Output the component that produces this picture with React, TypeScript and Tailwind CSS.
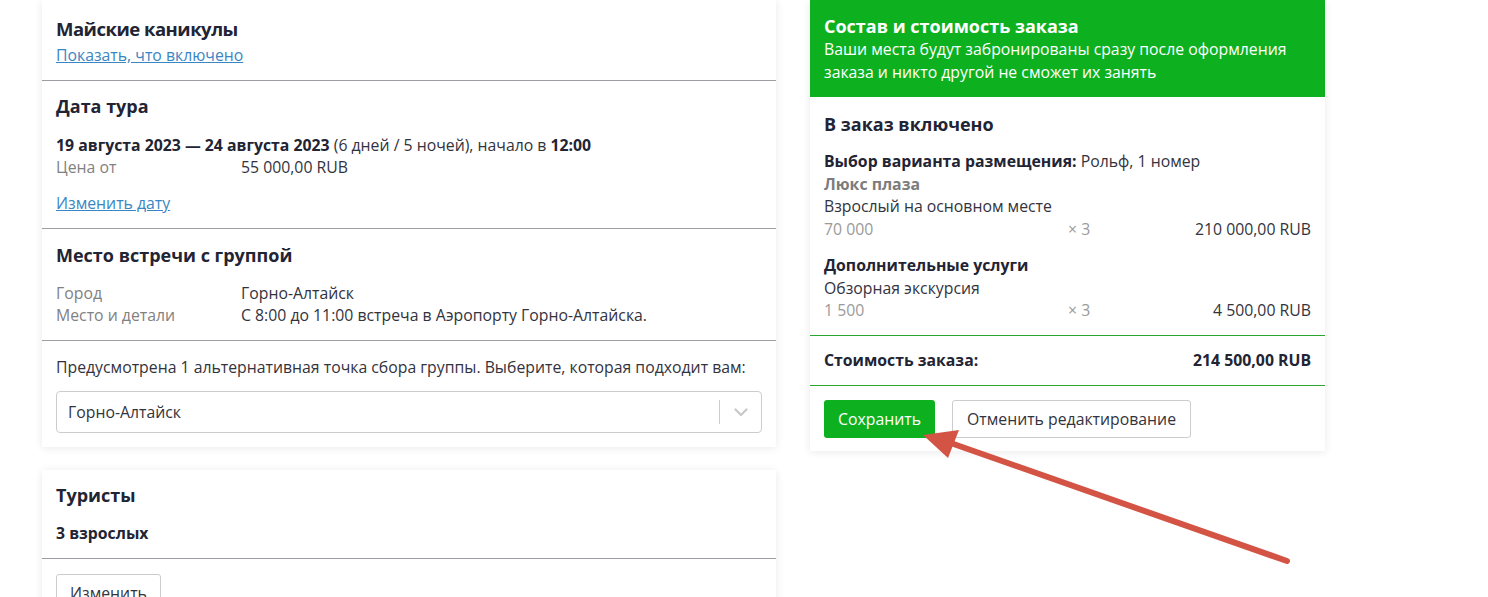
import React from "react";

const Divider = ({ green = false }: { green?: boolean }) => (
  <div className={green ? "h-px bg-[#2aa52e]" : "h-px bg-[#9c9ca3]"} />
);

export default function App() {
  return (
    <div className="relative w-[1488px] h-[597px] overflow-hidden bg-white font-['Open_Sans',sans-serif] text-[15.8px] leading-[22px] text-[#33333d]">
      <div className="flex items-start gap-[34px] pl-[42px]">
        {/* Left column */}
        <div className="flex w-[734px] flex-col gap-[23px]">
          <div className="bg-white shadow-[0_1px_8px_rgba(0,0,0,0.09)]">
            <div className="px-[14px] pt-[15px] pb-[14px]">
              <h1 className="text-[18.5px] leading-[28px] font-bold tracking-[-0.5px] text-[#222433]">Майские каникулы</h1>
              <a className="mt-px block text-[#3a86c4] underline">Показать, что включено</a>
            </div>
            <Divider />
            <div className="px-[14px] pt-[13px] pb-[14px]">
              <h2 className="text-[18px] leading-[24px] font-bold text-[#222433]">Дата тура</h2>
              <div className="mt-[16px]">
                <span className="font-bold text-[#222433]">19 августа 2023 — 24 августа 2023</span>{" "}
                (6 дней / 5 ночей), начало в <span className="font-bold text-[#222433]">12:00</span>
              </div>
              <div className="grid grid-cols-[185px_1fr]">
                <span className="text-[#818181]">Цена от</span>
                <span>55 000,00 RUB</span>
              </div>
              <a className="mt-[14px] block text-[#3a86c4] underline">Изменить дату</a>
            </div>
            <Divider />
            <div className="px-[14px] pt-[14px] pb-[14px]">
              <h2 className="text-[18px] leading-[24px] font-bold text-[#222433]">Место встречи с группой</h2>
              <div className="mt-[15px] grid grid-cols-[185px_1fr]">
                <span className="text-[#818181]">Город</span>
                <span>Горно-Алтайск</span>
                <span className="text-[#818181]">Место и детали</span>
                <span>С 8:00 до 11:00 встреча в Аэропорту Горно-Алтайска.</span>
              </div>
            </div>
            <Divider />
            <div className="px-[14px] pt-[15px] pb-[14px]">
              <p>Предусмотрена 1 альтернативная точка сбора группы. Выберите, которая подходит вам:</p>
              <div className="mt-[13px] flex h-[42px] items-center rounded-[4px] border border-[#cccccc] bg-white">
                <span className="flex-1 pl-[11px]">Горно-Алтайск</span>
                <span className="h-[24px] w-px bg-[#cccccc]" />
                <span className="flex w-[41px] justify-center text-[#cccccc]">
                  <svg width="14" height="9" viewBox="0 0 14 9" fill="none">
                    <path d="M1.5 1.5 L7 7 L12.5 1.5" stroke="#c8c8c8" strokeWidth="2.2" strokeLinecap="round" strokeLinejoin="round" />
                  </svg>
                </span>
              </div>
            </div>
          </div>

          <div className="bg-white shadow-[0_1px_8px_rgba(0,0,0,0.09)]">
            <div className="px-[14px] pt-[13px] pb-[14px]">
              <h2 className="text-[18px] leading-[24px] font-bold text-[#222433]">Туристы</h2>
              <div className="mt-[15px] font-bold text-[#222433]">3 взрослых</div>
            </div>
            <Divider />
            <div className="px-[14px] pt-[15px] pb-[14px]">
              <button className="h-[38px] rounded-[3px] border border-[#cccccc] bg-white px-[13px] text-[15.8px] text-[#33333d]">Изменить</button>
            </div>
          </div>
        </div>

        {/* Right column */}
        <div className="w-[515px] bg-white leading-[22.5px] shadow-[0_1px_8px_rgba(0,0,0,0.09)]">
          <div className="bg-[#0db120] px-[14px] pt-[14px] pb-[13px] text-white">
            <h2 className="text-[18px] leading-[24px] font-bold">Состав и стоимость заказа</h2>
            <p className="leading-[23px]">Ваши места будут забронированы сразу после оформления заказа и никто другой не сможет их занять</p>
          </div>
          <div className="px-[14px] pt-[15px] pb-[13px]">
            <h3 className="text-[18px] leading-[24px] font-bold text-[#222433]">В заказ включено</h3>
            <div className="mt-[14px]">
              <span className="font-bold text-[#222433]">Выбор варианта размещения:</span> Рольф, 1 номер
            </div>
            <div className="font-bold text-[#7c7c7c]">Люкс плаза</div>
            <div>Взрослый на основном месте</div>
            <div className="grid grid-cols-[244px_1fr_auto] text-[#9a9a9a]">
              <span>70 000</span>
              <span>× 3</span>
              <span className="text-[#33333d]">210 000,00 RUB</span>
            </div>
            <div className="mt-[14px] font-bold text-[#222433]">Дополнительные услуги</div>
            <div>Обзорная экскурсия</div>
            <div className="grid grid-cols-[244px_1fr_auto] text-[#9a9a9a]">
              <span>1 500</span>
              <span>× 3</span>
              <span className="text-[#33333d]">4 500,00 RUB</span>
            </div>
          </div>
          <Divider green />
          <div className="flex justify-between px-[14px] pt-[13px] pb-[14px] font-bold text-[#222433]">
            <span>Стоимость заказа:</span>
            <span>214 500,00 RUB</span>
          </div>
          <Divider green />
          <div className="flex gap-[17px] px-[14px] pt-[14px] pb-[13px]">
            <button className="h-[38px] rounded-[3px] bg-[#0db120] px-[14px] text-[15.8px] text-white">Сохранить</button>
            <button className="h-[38px] rounded-[3px] border border-[#cccccc] bg-white px-[14px] text-[15.8px] text-[#33333d]">Отменить редактирование</button>
          </div>
        </div>
      </div>

      {/* Annotation arrow */}
      <svg className="pointer-events-none absolute left-0 top-0" width="1488" height="597" viewBox="0 0 1488 597">
        <line x1="1287" y1="561" x2="945" y2="441" stroke="#d35445" strokeWidth="6" strokeLinecap="round" />
        <polygon points="923,435 959,430 948,458" fill="#d35445" />
      </svg>
    </div>
  );
}
